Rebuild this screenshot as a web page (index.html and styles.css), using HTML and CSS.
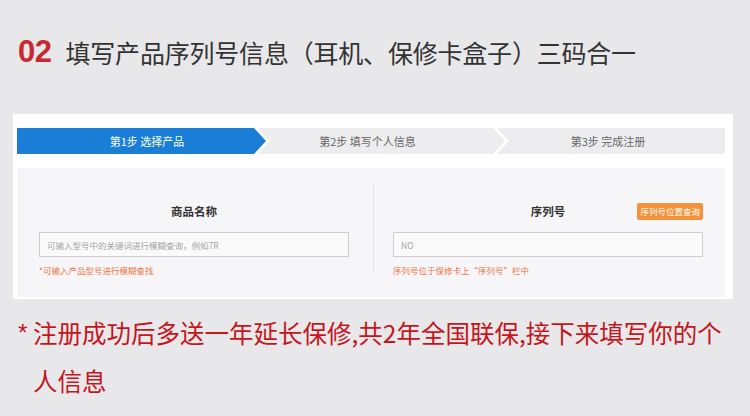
FILE: index.html
```html
<!DOCTYPE html>
<html lang="zh-CN">
<head>
<meta charset="utf-8">
<title>填写产品序列号信息</title>
<link rel="stylesheet" href="styles.css">
</head>
<body>
<div class="page">
  <h1 class="title"><span class="num">02</span><span class="ttext">填写产品序列号信息（耳机、保修卡盒子）三码合一</span></h1>
  <div class="panel">
    <div class="steps">
      <div class="step step1"><span>第1步 选择产品</span></div>
      <div class="step step2"><span>第2步 填写个人信息</span></div>
      <div class="step step3"><span>第3步 完成注册</span></div>
    </div>
    <div class="form">
      <div class="col col-left">
        <div class="head"><span></span><span class="label">商品名称</span><span></span></div>
        <input class="field" type="text" placeholder="可输入型号中的关键词进行模糊查询，例如7R">
        <p class="hint">*可输入产品型号进行模糊查找</p>
      </div>
      <div class="divider"></div>
      <div class="col col-right">
        <div class="head"><span></span><span class="label">序列号</span><span class="btn">序列号位置查询</span></div>
        <input class="field" type="text" placeholder="NO">
        <p class="hint">序列号位于保修卡上“序列号”栏中</p>
      </div>
    </div>
  </div>
  <div class="note"><span class="star">*</span><span class="ntext">注册成功后多送一年延长保修,共2年全国联保,接下来填写你的个<br>人信息</span></div>
</div>
</body>
</html>
```

FILE: styles.css
```css
html, body {
  margin: 0;
  padding: 0;
}
body {
  background: #e8e7ea;
  font-family: "Noto Sans CJK SC", "Noto Sans", sans-serif;
  width: 750px;
  height: 416px;
  overflow: hidden;
}
.page {
  display: flex;
  flex-direction: column;
}
.title {
  margin: 37px 0 0 18px;
  height: 30px;
  display: flex;
  align-items: center;
  font-weight: normal;
}
.num {
  font-family: "Liberation Sans", Arial, sans-serif;
  font-weight: 700;
  font-size: 31px;
  color: #c62a30;
  line-height: 30px;
  letter-spacing: -0.5px;
}
.ttext {
  margin-left: 14px;
  font-size: 25px;
  letter-spacing: -0.2px;
  color: #333333;
  line-height: 30px;
}
.panel {
  margin: 47px 17px 0 13px;
  background: #ffffff;
  padding: 14px 8px 2px 4px;
}
.steps {
  display: flex;
  height: 26px;
}
.step {
  display: flex;
  align-items: center;
  justify-content: center;
  font-size: 11px;
  color: #666666;
  background: #ededef;
  height: 26px;
  box-sizing: border-box;
}
.step1 {
  width: 249px;
  background: #1a7ed6;
  color: #ffffff;
  padding-left: 11px;
  clip-path: polygon(0 0, calc(100% - 12px) 0, 100% 50%, calc(100% - 12px) 100%, 0 100%);
}
.step2 {
  width: 247px;
  margin-left: -8px;
  padding-right: 28px;
  clip-path: polygon(0 0, calc(100% - 12px) 0, 100% 50%, calc(100% - 12px) 100%, 0 100%, 12px 50%);
}
.step3 {
  flex: 1;
  margin-left: -8px;
  padding-right: 6px;
  clip-path: polygon(0 0, 100% 0, 100% 100%, 0 100%, 12px 50%);
}
.form {
  margin-top: 14px;
  height: 129px;
  background: #f6f6f8;
  display: flex;
}
.col {
  display: flex;
  flex-direction: column;
  padding-top: 34px;
}
.col-left {
  width: 356px;
  box-sizing: border-box;
  padding-left: 22px;
  padding-right: 24px;
}
.col-right {
  flex: 1;
  padding-left: 19px;
  padding-right: 22px;
}
.divider {
  width: 1px;
  background: #e3e3e6;
  margin-top: 14px;
  height: 90px;
}
.head {
  display: grid;
  grid-template-columns: 1fr auto 1fr;
  align-items: center;
  height: 18px;
}
.label {
  font-size: 11.5px;
  font-weight: 700;
  color: #333333;
  line-height: 16px;
}
.btn {
  justify-self: end;
  background: #f3923a;
  color: #ffffff;
  font-size: 8.5px;
  height: 17px;
  line-height: 17px;
  padding: 0 3px;
  border-radius: 2px;
}
.field {
  margin: 12px 0 0 0;
  width: 100%;
  height: 25px;
  box-sizing: border-box;
  border: 1px solid #cdcdcf;
  background: #fafafb;
  padding: 0 7px;
  font-family: "Noto Sans CJK SC", "Noto Sans", sans-serif;
  font-size: 8.5px;
  color: #555555;
  outline: none;
}
.field::placeholder {
  color: #a3a3a6;
}
.hint {
  margin: 7px 0 0 0;
  font-size: 8.5px;
  line-height: 12px;
  color: #f07244;
}
.note {
  margin: 10px 0 0 18px;
  display: flex;
  color: #c4161c;
  font-size: 24.5px;
  line-height: 48px;
}
.star {
  width: 15px;
  flex: none;
  font-family: "Liberation Sans", Arial, sans-serif;
}
.ntext {
  white-space: nowrap;
}
```
